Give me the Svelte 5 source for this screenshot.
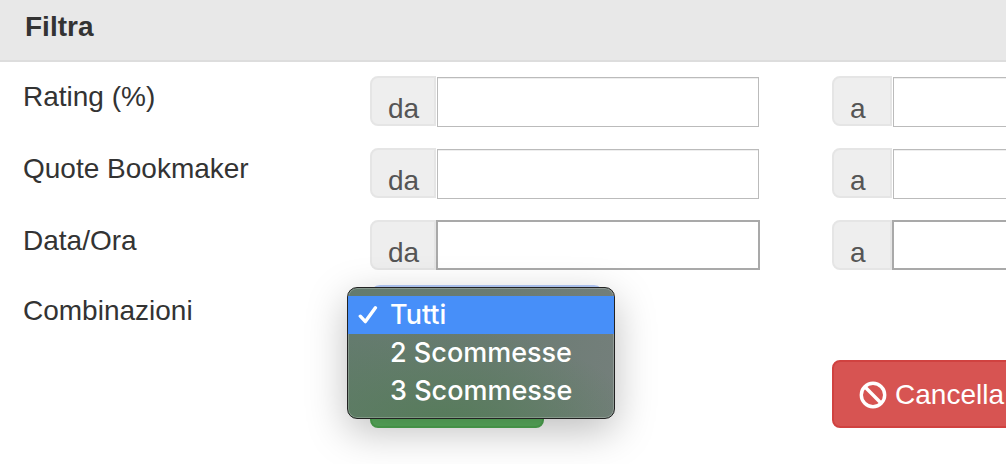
<script>
  const ranges = [
    { id: 'rating', label: 'Rating (%)' },
    { id: 'quote', label: 'Quote Bookmaker' },
    { id: 'data', label: 'Data/Ora', strong: true }
  ];
  const options = ['Tutti', '2 Scommesse', '3 Scommesse'];

  let selected = $state('Tutti');
  let open = $state(true);

  function choose(option) {
    selected = option;
    open = false;
  }
</script>

<section class="panel">
  <header><h1>Filtra</h1></header>

  <form onsubmit={(e) => e.preventDefault()}>
    {#each ranges as range}
      <div class="row">
        <label class="name" for="{range.id}-da">{range.label}</label>
        <div class="group">
          <label class="addon from" for="{range.id}-da">da</label>
          <input id="{range.id}-da" type="text" class:strong={range.strong} />
        </div>
        <div class="group">
          <label class="addon to" for="{range.id}-a">a</label>
          <input id="{range.id}-a" type="text" class:strong={range.strong} />
        </div>
      </div>
    {/each}

    <div class="row choice">
      <label class="name" for="combinazioni">Combinazioni</label>
      <div class="picker">
        <select id="combinazioni" bind:value={selected}>
          {#each options as option}
            <option>{option}</option>
          {/each}
        </select>
        {#if open}
          <div class="menu" role="listbox" aria-label="Combinazioni">
            {#each options as option}
              <button
                type="button"
                role="option"
                class="item"
                class:active={option === selected}
                aria-selected={option === selected}
                onclick={() => choose(option)}
              >
                <svg viewBox="0 0 20 20" aria-hidden="true">
                  {#if option === selected}
                    <path d="M2.3 11.2 L7.4 16.6 L17.4 2.8" />
                  {/if}
                </svg>
                <span>{option}</span>
              </button>
            {/each}
          </div>
        {/if}
      </div>
    </div>

    <div class="row actions">
      <div class="cell-submit">
        <button type="submit" class="btn apply" aria-label="Filtra"></button>
      </div>
      <div>
        <button type="reset" class="btn clear">
          <svg viewBox="0 0 28 28" aria-hidden="true">
            <circle cx="14" cy="14" r="11.7" />
            <path d="M5.8 5.8 L22.2 22.2" />
          </svg>
          Cancella
        </button>
      </div>
    </div>
  </form>
</section>

<style>
  :global(body) {
    margin: 0;
    overflow-x: hidden;
    background: #fff;
  }

  .panel {
    overflow-x: hidden;
    font-family: 'Liberation Sans', Arial, sans-serif;
    font-size: 28px;
    color: #333;
  }

  header {
    padding: 7px 25px 13px;
    background: #e8e8e8;
    border-bottom: 2px solid #ddd;
  }

  h1 {
    margin: 0;
    font-size: 28px;
    line-height: 40px;
    font-weight: 700;
  }

  form {
    padding: 14px 0 36px 22px;
  }

  .row {
    display: grid;
    grid-template-columns: 35.37% 46.95% 46.95%;
    margin-bottom: 22px;
  }

  .name {
    padding-left: 1px;
    line-height: 42px;
  }

  .group {
    display: flex;
    height: 50px;
    margin-right: 72px;
  }

  .addon {
    box-sizing: border-box;
    flex: none;
    padding: 13px 16px 0;
    line-height: 36px;
    color: #555;
    background: #eee;
    border: 2px solid #e5e5e5;
    border-radius: 8px 0 0 8px;
  }

  .from {
    width: 66px;
  }

  .to {
    width: 60px;
  }

  input {
    box-sizing: border-box;
    flex: 1;
    min-width: 0;
    height: 50px;
    margin: 1px 1px 0;
    padding: 0 12px;
    font: inherit;
    color: #555;
    background: #fff;
    border: 1px solid #bbb;
    border-radius: 0;
    box-shadow: inset 0 1px #eee;
    outline: none;
  }

  input.strong {
    margin: 0;
    border: 2px solid #a9a9a9;
    box-shadow: none;
  }

  .choice {
    align-items: center;
    margin: -7px 0 25px;
  }

  .choice .name {
    padding-top: 2px;
  }

  .picker {
    position: relative;
    height: 50px;
  }

  select {
    width: 234px;
    height: 44px;
    padding: 0 10px;
    font: inherit;
    color: #333;
    background: #fff;
    border: 2px solid #b4cbfa;
    border-radius: 10px;
    appearance: none;
  }

  .menu {
    position: absolute;
    z-index: 2;
    top: 2px;
    left: -23px;
    box-sizing: border-box;
    width: 268px;
    padding: 8px 0;
    background:
      radial-gradient(ellipse 200px 100px at 36% 110%, #557c59, transparent),
      linear-gradient(100deg, #637b6d, #6a7b72 50%, #747f7b);
    border: 1px solid #222;
    border-radius: 10px;
    box-shadow:
      inset 0 0 0 1px rgba(255, 255, 255, 0.22),
      0 12px 40px rgba(0, 0, 0, 0.26);
  }

  .item {
    display: flex;
    align-items: center;
    gap: 12px;
    width: 100%;
    height: 38px;
    padding: 0 10px;
    font: 500 27px/38px Inter, sans-serif;
    color: #fff;
    text-align: left;
    white-space: nowrap;
    background: none;
    border: 0;
  }

  .item.active {
    background: #478ff9;
  }

  .item svg {
    flex: none;
    width: 20px;
    height: 20px;
    fill: none;
    stroke: #fff;
    stroke-width: 3.4;
    stroke-linecap: round;
    stroke-linejoin: round;
  }

  .actions {
    margin: 0;
  }

  .cell-submit {
    grid-column: 2;
  }

  .btn {
    display: flex;
    align-items: center;
    gap: 8px;
    height: 68px;
    padding: 1px 24px 0 25px;
    font: inherit;
    color: #fff;
    border: 2px solid;
    border-radius: 8px;
  }

  .apply {
    width: 174px;
    background: #5cb360;
    border-color: #4faa52;
  }

  .clear {
    background: #d75452;
    border-color: #d04240;
  }

  .clear svg {
    width: 28px;
    height: 28px;
    fill: none;
    stroke: #fff;
    stroke-width: 3.4;
  }
</style>
